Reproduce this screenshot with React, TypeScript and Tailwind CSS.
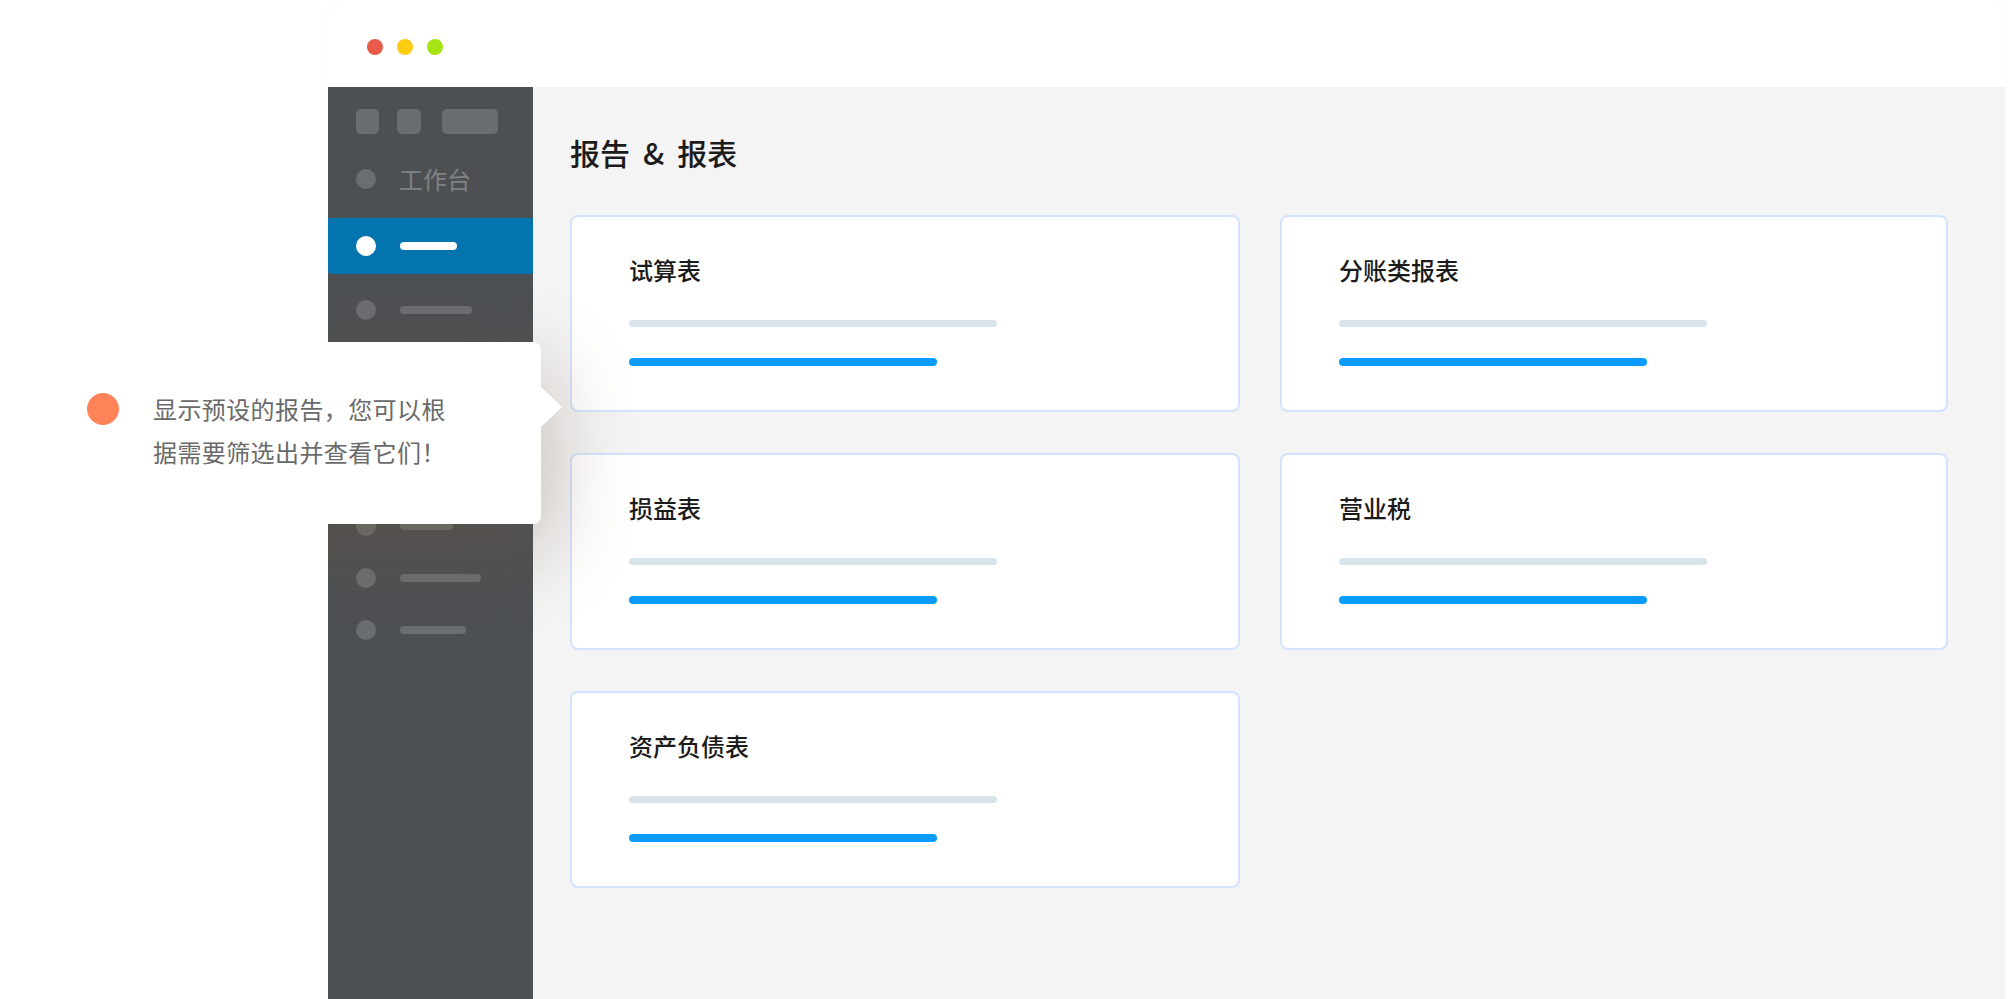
import React from "react";

const font = { fontFamily: '"Noto Sans CJK SC", "Noto Sans", sans-serif' };

function SideRow({ w, h = "h-[52px]", extra = "" }: { w: string; h?: string; extra?: string }) {
  return (
    <div className={`flex items-center ${h} ${extra} pl-[28px]`}>
      <div className="w-[20px] h-[20px] rounded-full bg-[#6b6e71]" />
      <div className={`ml-[24px] h-[8px] rounded-full bg-[#6b6e71] ${w}`} />
    </div>
  );
}

function Card({ title }: { title: string }) {
  return (
    <div className="h-[197px] rounded-[8px] border-2 border-[#d3e2fd] bg-white pl-[57px] pt-[35px]">
      <div className="text-[24px] leading-[36px] font-medium text-[#1b1b1b]">{title}</div>
      <div className="mt-[32px] h-[7px] w-[368px] rounded-full bg-[#d9e3ea]" />
      <div className="mt-[31px] h-[8px] w-[308px] rounded-full bg-[#0a9bff]" />
    </div>
  );
}

export default function App() {
  return (
    <div className="relative w-[2012px] h-[999px] overflow-hidden bg-white" style={font}>
      {/* window */}
      <div className="absolute left-[328px] top-0 w-[1677px] h-[1040px] rounded-t-[16px] bg-white shadow-[0_0_2px_rgba(0,0,0,0.05)] flex flex-col">
        <div className="h-[87px] flex items-center pl-[39px] gap-[14px] pt-[7px]">
          <div className="w-[16px] h-[16px] rounded-full bg-[#ea5a4b]" />
          <div className="w-[16px] h-[16px] rounded-full bg-[#fdcc10]" />
          <div className="w-[16px] h-[16px] rounded-full bg-[#a6e312]" />
        </div>
        <div className="relative flex flex-1 overflow-hidden">
          {/* sidebar */}
          <div className="w-[205px] bg-[#4d5053] flex flex-col pt-[22px]">
            <div className="flex items-center h-[25px] pl-[28px]">
              <div className="w-[23px] h-[25px] rounded-[5px] bg-[#6a6d70]" />
              <div className="ml-[18px] w-[24px] h-[25px] rounded-[5px] bg-[#6a6d70]" />
              <div className="ml-[21px] w-[56px] h-[25px] rounded-[5px] bg-[#6a6d70]" />
            </div>
            <div className="mt-[17px] h-[56px] flex items-center pl-[28px]">
              <div className="w-[20px] h-[20px] rounded-full bg-[#6b6e71]" />
              <div className="ml-[23px] text-[24px] leading-[30px] text-[#7f8285]">工作台</div>
            </div>
            <div className="mt-[11px] h-[56px] flex items-center pl-[28px] bg-[#0374ad] rounded-bl-[4px]">
              <div className="w-[20px] h-[20px] rounded-full bg-white" />
              <div className="ml-[24px] h-[8px] w-[57px] rounded-full bg-white" />
            </div>
            <SideRow w="w-[72px]" extra="mt-[10px]" />
            <SideRow w="w-[60px]" />
            <SideRow w="w-[76px]" />
            <SideRow w="w-[64px]" />
            <SideRow w="w-[53px]" extra="mt-[8px]" />
            <SideRow w="w-[81px]" />
            <SideRow w="w-[66px]" />
          </div>
          {/* content */}
          <div className="flex-1 bg-[#f4f4f4] pl-[37px] pt-[45px]">
            <div className="flex items-center text-[30px] leading-[40px] font-medium text-[#1c1c1c]">
              <span>报告</span>
              <span className="mx-[13px]">&amp;</span>
              <span>报表</span>
            </div>
            <div className="mt-[43px] grid grid-cols-[670px_668px] gap-x-[40px] gap-y-[41px]">
              <Card title="试算表" />
              <Card title="分账类报表" />
              <Card title="损益表" />
              <Card title="营业税" />
              <Card title="资产负债表" />
            </div>
          </div>
          {/* tooltip shadow, clipped to the window */}
          <div className="absolute left-[-296px] top-[255px] w-[509px] h-[182px] rounded-[8px] shadow-[10px_25px_80px_rgba(110,85,60,0.32)] pointer-events-none" />
        </div>
      </div>

      {/* tooltip */}
      <div className="absolute left-[32px] top-[342px] w-[509px] h-[182px] rounded-[8px] bg-white">
        <div className="absolute right-[-21px] top-[45px] w-0 h-0 border-y-[20px] border-y-transparent border-l-[21px] border-l-white" />
        <div className="flex pt-[45px] pl-[55px]">
          <div className="mt-[6px] w-[32px] h-[32px] rounded-full bg-[#ff8359] shrink-0" />
          <div className="ml-[34px] text-[24px] leading-[43px] tracking-[0.4px] text-[#6a6a6a]">
            显示预设的报告，您可以根
            <br />
            据需要筛选出并查看它们！
          </div>
        </div>
      </div>
    </div>
  );
}
